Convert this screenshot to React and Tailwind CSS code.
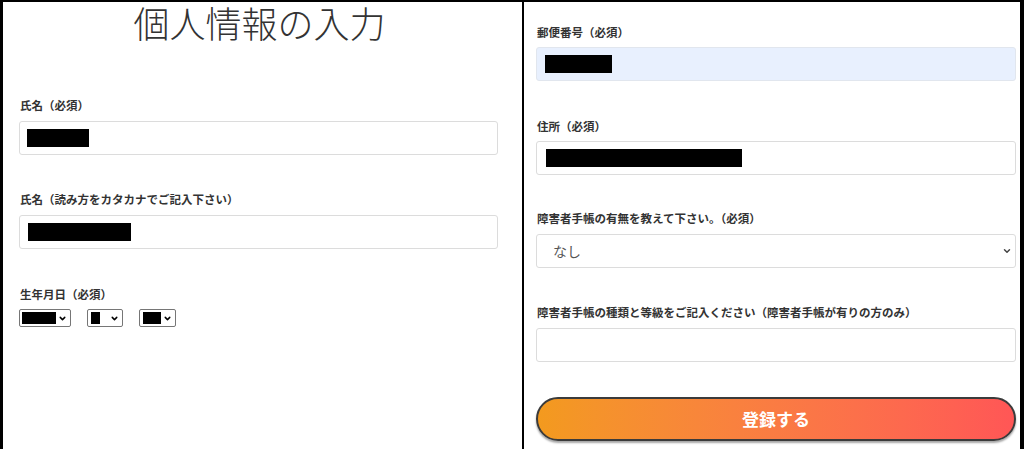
import { ChevronDown } from "lucide-react";

const font = { fontFamily: '"Noto Sans CJK JP", "Noto Sans", sans-serif' };

const Label = ({ children, className = "" }) => (
  <div className={`h-4 text-[11.5px] leading-4 font-bold text-[#333] ${className}`}>{children}</div>
);

const Field = ({ block, blockClass = "", className = "" }) => (
  <div className={`h-[34px] rounded-[3px] border border-[#dcdcdc] flex items-center px-2 ${className}`}>
    {block && <span className={`h-[18px] bg-black ${blockClass}`} />}
  </div>
);

const MiniSelect = ({ width, block }) => (
  <div className={`h-[18px] ${width} border border-[#767676] rounded-[2px] flex items-center pl-[2px] pr-[3px] justify-between`}>
    <span className={`h-3 bg-black ${block}`} />
    <ChevronDown className="w-[9px] h-[9px] text-black" strokeWidth={4} />
  </div>
);

const App = () => {
  return (
    <div style={font} className="w-[1024px] h-[449px] bg-white flex border-t-2 border-l-[3px] border-r-4 border-black overflow-hidden">
      {/* left panel */}
      <div className="w-[521px] shrink-0 border-r-2 border-black pl-4 pr-6 flex flex-col">
        <h1 className="h-[40px] text-center text-[36px] leading-[40px] font-light text-[#333] pl-[2px]">個人情報の入力</h1>
        <Label className="mt-[55px] pl-[1px]">氏名（必須）</Label>
        <Field block blockClass="w-[62px] -ml-[1px]" className="mt-2" />
        <Label className="mt-[36px] pl-[1px]">氏名（読み方をカタカナでご記入下さい）</Label>
        <Field block blockClass="w-[103px]" className="mt-2" />
        <Label className="mt-[37px] pl-[1px]">生年月日（必須）</Label>
        <div className="mt-[7px] flex gap-4">
          <MiniSelect width="w-[52px]" block="w-[34px]" />
          <MiniSelect width="w-[36px]" block="w-[9px] ml-[1px]" />
          <MiniSelect width="w-[37px]" block="w-[18px] ml-[1px]" />
        </div>
      </div>

      {/* right panel */}
      <div className="flex-1 pl-3 pr-[4px] pt-[22px] flex flex-col">
        <Label className="pl-[1px]">郵便番号（必須）</Label>
        <Field block blockClass="w-[67px]" className="mt-[7px] bg-[#e8f0fe] border-[#e1e6ee]" />
        <Label className="mt-[37px] pl-[1px]">住所（必須）</Label>
        <Field block blockClass="w-[196px] ml-[1px]" className="mt-[7px]" />
        <Label className="mt-[35px] pl-[1px]">障害者手帳の有無を教えて下さい。（必須）</Label>
        <div className="mt-[8px] h-[34px] rounded-[3px] border border-[#dcdcdc] flex items-center justify-between pl-4 pr-[3px]">
          <span className="text-[14px] text-[#555]">なし</span>
          <ChevronDown className="w-[10px] h-[10px] text-[#444]" strokeWidth={3.5} />
        </div>
        <Label className="mt-[36px] pl-[1px]">障害者手帳の種類と等級をご記入ください（障害者手帳が有りの方のみ）</Label>
        <Field className="mt-2" />
        <button className="mt-[35px] h-[44px] w-full rounded-full border-2 border-[#3b3b3b] bg-gradient-to-r from-[#f39a1e] to-[#ff5656] text-white text-[17px] font-bold shadow-[0_2px_2px_rgba(0,0,0,0.35)]">
          登録する
        </button>
      </div>
    </div>
  );
};

export default App;
